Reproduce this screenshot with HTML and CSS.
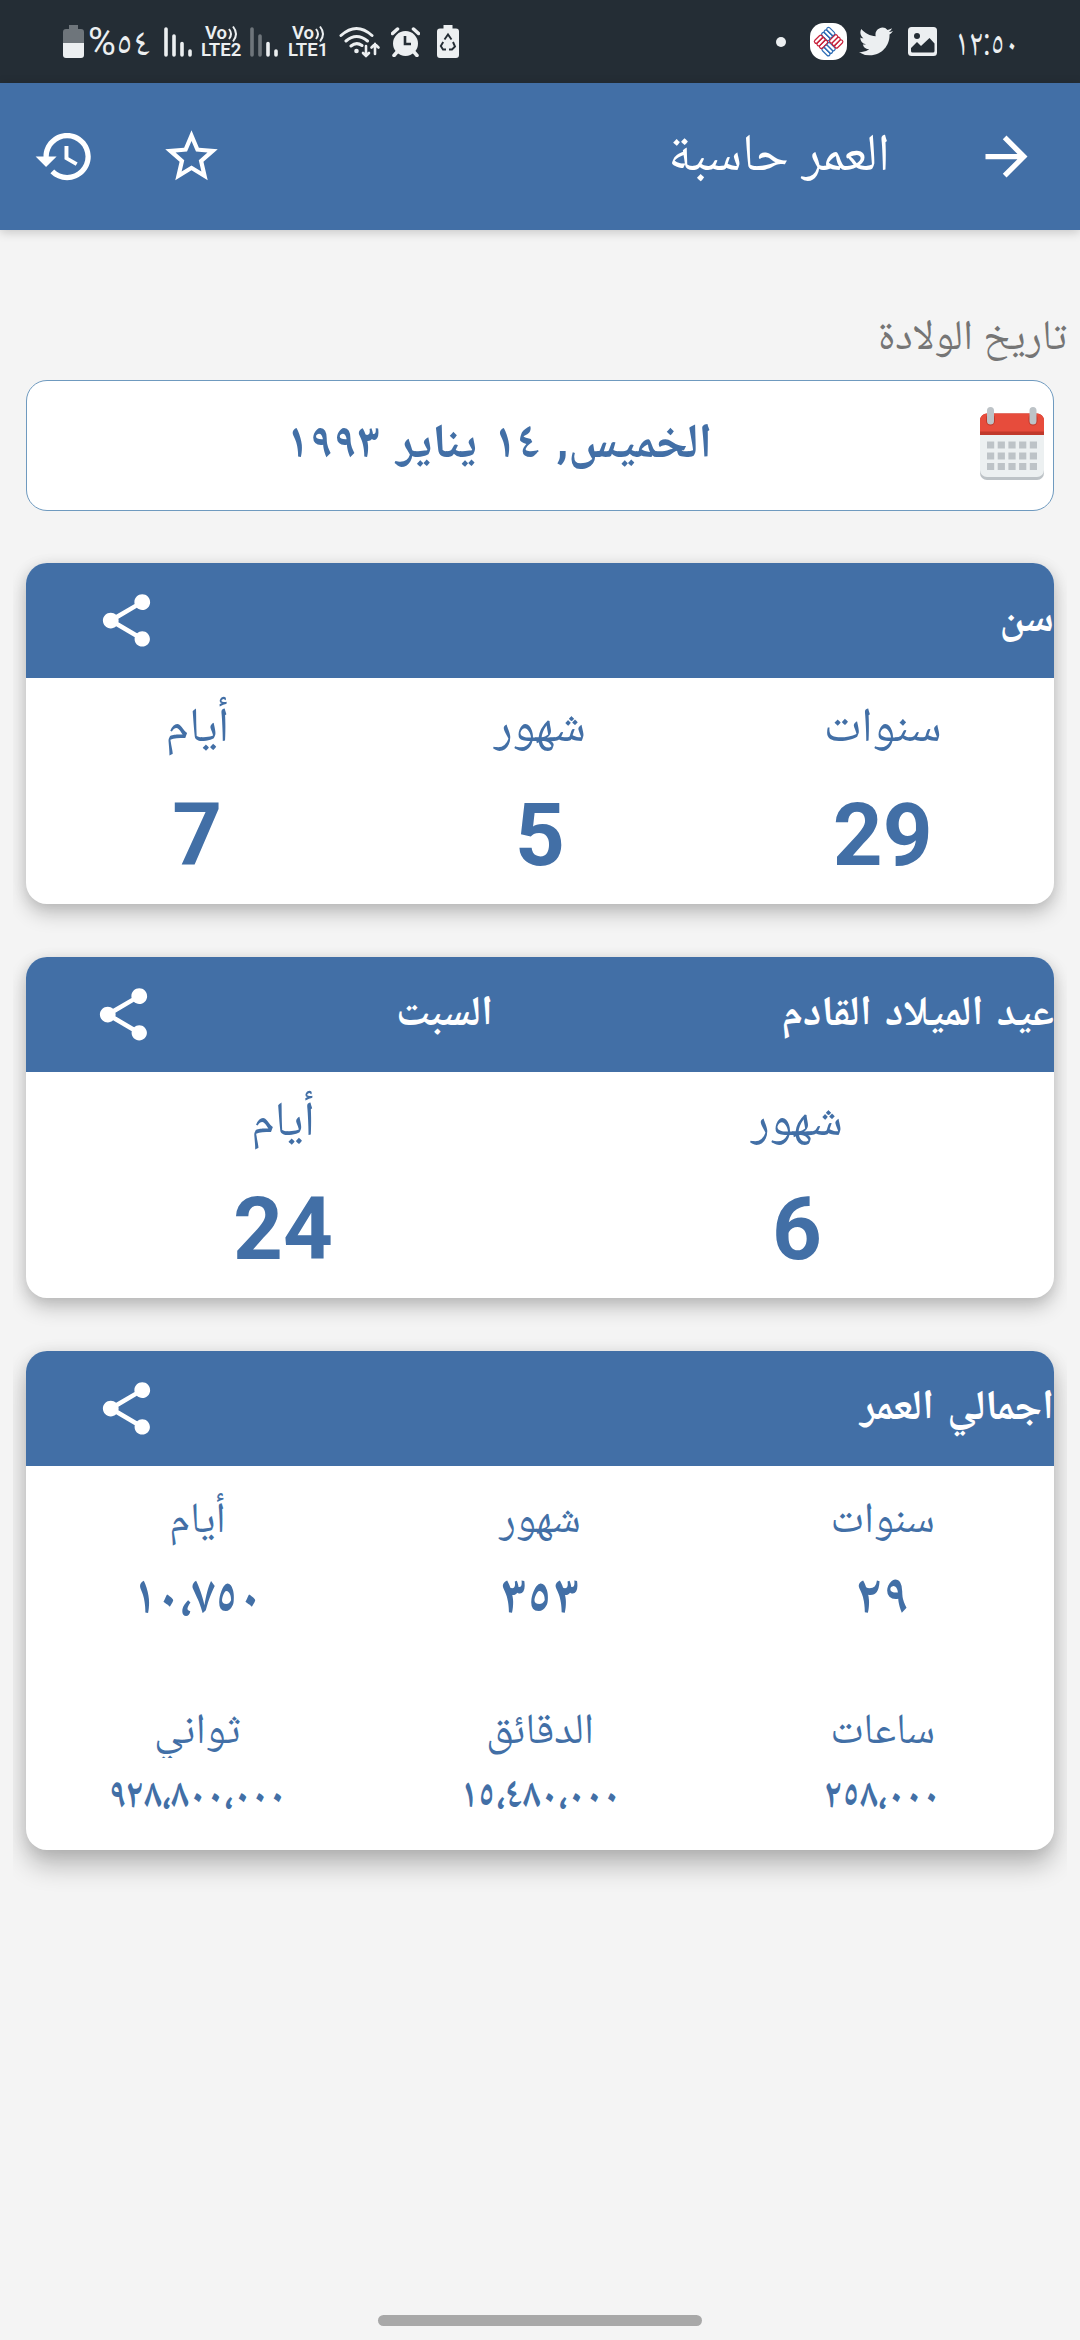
FILE: index.html
```html
<!DOCTYPE html>
<html lang="ar" dir="rtl">
<head>
    <meta charset="UTF-8">
    <meta name="viewport" content="width=device-width, initial-scale=1.0">
    <title>العمر حاسبة</title>
    <link rel="stylesheet" href="styles.css">
</head>
<body>
    <!-- Shared icons -->
    <svg class="sprite" width="0" height="0">
        <symbol id="icon-share" viewBox="0 0 24 24">
            <path d="M18 16.08c-.76 0-1.44.3-1.96.77L8.91 12.7c.05-.23.09-.46.09-.7s-.04-.47-.09-.7l7.05-4.11c.54.5 1.25.81 2.04.81 1.66 0 3-1.34 3-3s-1.34-3-3-3-3 1.34-3 3c0 .24.04.47.09.7L8.04 9.81C7.5 9.31 6.79 9 6 9c-1.66 0-3 1.34-3 3s1.34 3 3 3c.79 0 1.5-.31 2.04-.81l7.12 4.16c-.05.21-.08.43-.08.65 0 1.61 1.31 2.92 2.92 2.92 1.61 0 2.92-1.31 2.92-2.92s-1.31-2.92-2.92-2.92z"/>
        </symbol>
    </svg>

    <!-- Status bar -->
    <div class="status-bar">
        <div class="status-group">
            <svg class="battery" viewBox="0 0 21 33">
                <path d="M6 0h9v4h3a3 3 0 0 1 3 3v11H0V7a3 3 0 0 1 3-3h3z" fill="#6e757b"/>
                <path d="M0 18h21v12a3 3 0 0 1-3 3H3a3 3 0 0 1-3-3z"/>
            </svg>
            <span class="percent">%٥٤</span>
            <svg class="signal" viewBox="0 0 28 30">
                <path d="M2 2v26M10 9v19M18 16.5v11.5M26 24v4"/>
            </svg>
            <div class="lte">
                <span class="volte">Vo<svg viewBox="0 0 10 18"><path d="M1 4q4 5 0 10M5 1.5q6 7.5 0 15"/></svg></span>
                <span>LTE2</span>
            </div>
            <svg class="signal" viewBox="0 0 28 30">
                <path class="off" d="M2 2v26M10 9v19"/>
                <path d="M18 16.5v11.5M26 24v4"/>
            </svg>
            <div class="lte lte-one">
                <span class="volte">Vo<svg viewBox="0 0 10 18"><path d="M1 4q4 5 0 10M5 1.5q6 7.5 0 15"/></svg></span>
                <span>LTE1</span>
            </div>
            <svg class="wifi" viewBox="0 0 43 32">
                <g fill="none" stroke="#eceff1" stroke-width="3" stroke-linecap="round">
                    <path d="M2 9.5q15.5-14 31 0M7 15q10.5-9 21.5 0M12 20q5.5-4.5 11-.5"/>
                    <path d="M27 20v10m-3-3l3 3 3-3M36 28V18m-3.5 3.5L36 18l3.5 3.5" stroke-width="2.6"/>
                </g>
                <circle cx="17.5" cy="25" r="2.3"/>
            </svg>
            <svg class="alarm" viewBox="0 0 29 30">
                <circle cx="14.5" cy="16.5" r="12.5"/>
                <path d="M1.5 6.5l5-4.5M27.5 6.5l-5-4.5M6 25l-3 3.5M23 25l3 3.5" stroke="#eceff1" stroke-width="3.5" stroke-linecap="round"/>
                <path d="M14 9v8h6" fill="none" stroke="#242d35" stroke-width="2.6"/>
            </svg>
            <svg class="saver" viewBox="0 0 22 33">
                <path d="M6.5 0h9v3.5H19a3 3 0 0 1 3 3V30a3 3 0 0 1-3 3H3a3 3 0 0 1-3-3V6.5a3 3 0 0 1 3-3h3.5z"/>
                <path d="M7.5 14.5L11 9.5l3.5 5M16 17l2 4.5-3 3h-3M9 24.5H6L3.8 21l2.4-4" fill="none" stroke="#242d35" stroke-width="1.9"/>
            </svg>
        </div>

        <div class="status-group">
            <span class="dot"></span>
            <svg class="app-badge" viewBox="0 0 37 37">
                <rect width="37" height="37" rx="14" fill="#fff"/>
                <g transform="rotate(45 18.5 18.5)" fill="none" stroke-width="1.2">
                    <g stroke="#2f6db5">
                        <rect x="8" y="8" width="10" height="3.6" rx="1.8"/>
                        <rect x="8" y="11.6" width="10" height="3.6" rx="1.8"/>
                        <rect x="8" y="15.2" width="10" height="3.6" rx="1.8"/>
                        <rect x="19" y="18.5" width="10" height="3.6" rx="1.8"/>
                        <rect x="19" y="22.1" width="10" height="3.6" rx="1.8"/>
                        <rect x="19" y="25.7" width="10" height="3.6" rx="1.8"/>
                    </g>
                    <g stroke="#c8203a">
                        <rect x="8" y="19" width="3.6" height="10" rx="1.8"/>
                        <rect x="11.6" y="19" width="3.6" height="10" rx="1.8"/>
                        <rect x="15.2" y="19" width="3.6" height="10" rx="1.8"/>
                        <rect x="18.5" y="8" width="3.6" height="10" rx="1.8"/>
                        <rect x="22.1" y="8" width="3.6" height="10" rx="1.8"/>
                        <rect x="25.7" y="8" width="3.6" height="10" rx="1.8"/>
                    </g>
                </g>
            </svg>
            <svg class="twitter" viewBox="0 2.2 24 19.6">
                <path d="M23.953 4.57a10 10 0 0 1-2.825.775 4.958 4.958 0 0 0 2.163-2.723c-.951.555-2.005.959-3.127 1.184a4.92 4.92 0 0 0-8.384 4.482C7.69 8.095 4.067 6.13 1.64 3.162a4.822 4.822 0 0 0-.666 2.475c0 1.71.87 3.213 2.188 4.096a4.904 4.904 0 0 1-2.228-.616v.06a4.923 4.923 0 0 0 3.946 4.827 4.996 4.996 0 0 1-2.212.085 4.936 4.936 0 0 0 4.604 3.417 9.867 9.867 0 0 1-6.102 2.105c-.39 0-.779-.023-1.17-.067a13.995 13.995 0 0 0 7.557 2.209c9.053 0 13.998-7.496 13.998-13.985 0-.21 0-.42-.015-.63A9.935 9.935 0 0 0 24 4.59z"/>
            </svg>
            <svg class="gallery" viewBox="0 0 29 29">
                <rect width="29" height="29" rx="3.5"/>
                <circle cx="9" cy="9" r="3" fill="#242d35"/>
                <path d="M3 21l6-6 4 4 8.5-8 5 5.5V24a1.5 1.5 0 0 1-1.5 1.5H4.5A1.5 1.5 0 0 1 3 24z" fill="#242d35"/>
            </svg>
            <span class="time">١٢:٥٠</span>
        </div>
    </div>

    <!-- App bar -->
    <header class="app-bar">
        <svg class="icon" viewBox="0 0 24 24"><path d="M12 4l-1.41 1.41L16.17 11H4v2h12.17l-5.58 5.59L12 20l8-8z"/></svg>
        <h1>العمر حاسبة</h1>
        <svg class="icon" viewBox="0 0 24 24"><path d="M22 9.24l-7.19-.62L12 2 9.19 8.63 2 9.24l5.46 4.73L5.82 21 12 17.27 18.18 21l-1.63-7.03L22 9.24zM12 15.4l-3.76 2.27 1-4.28-3.32-2.88 4.38-.38L12 6.1l1.71 4.04 4.38.38-3.32 2.88 1 4.28L12 15.4z"/></svg>
        <svg class="icon" viewBox="0 0 24 24"><path d="M13 3c-4.97 0-9 4.03-9 9H1l3.89 3.89.07.14L9 12H6c0-3.87 3.13-7 7-7s7 3.13 7 7-3.13 7-7 7c-1.93 0-3.68-.79-4.94-2.06l-1.42 1.42C8.27 19.99 10.51 21 13 21c4.97 0 9-4.03 9-9s-4.03-9-9-9zm-1 5v5l4.28 2.54.72-1.21-3.5-2.08V8H12z"/></svg>
    </header>

    <main>
        <p class="field-label">تاريخ الولادة</p>
        <div class="date-field">
            <svg class="calendar" viewBox="0 0 64 73">
                <path d="M0 28h64v38a7 7 0 0 1-7 7H7a7 7 0 0 1-7-7z" fill="#bdc3c7"/>
                <path d="M0 28h64v35a7 7 0 0 1-7 7H7a7 7 0 0 1-7-7z" fill="#ecf0f1"/>
                <path d="M7 6.5h50a7 7 0 0 1 7 7V28H0V13.5a7 7 0 0 1 7-7z" fill="#c0392b"/>
                <path d="M7 6.5h50a7 7 0 0 1 7 7V24.5H0V13.5a7 7 0 0 1 7-7z" fill="#e74c3c"/>
                <path d="M10.5 11v3M53 11v3" stroke="#c0392b" stroke-width="9" stroke-linecap="round"/>
                <path d="M10.5 3.5v10.5M53 3.5v10.5" stroke="#bdc3c7" stroke-width="7" stroke-linecap="round"/>
                <path d="M7 38h50.5M7 49h50.5M7 59.5h50.5" stroke="#bdc3c7" stroke-width="7.2" stroke-dasharray="7.2 3.5"/>
            </svg>
            <span class="date">الخميس, ١٤ يناير ١٩٩٣</span>
        </div>

        <!-- Age -->
        <section class="card">
            <div class="card-header">
                <h2>سن</h2>
                <svg class="icon"><use href="#icon-share"/></svg>
            </div>
            <div class="columns">
                <div class="item"><span class="name">سنوات</span><span class="number">29</span></div>
                <div class="item"><span class="name">شهور</span><span class="number">5</span></div>
                <div class="item"><span class="name">أيام</span><span class="number">7</span></div>
            </div>
        </section>

        <!-- Next birthday -->
        <section class="card birthday">
            <div class="card-header">
                <h2>عيد الميلاد القادم</h2>
                <span class="weekday">السبت</span>
                <svg class="icon"><use href="#icon-share"/></svg>
            </div>
            <div class="columns">
                <div class="item"><span class="name">شهور</span><span class="number">6</span></div>
                <div class="item"><span class="name">أيام</span><span class="number">24</span></div>
            </div>
        </section>

        <!-- Total age -->
        <section class="card total">
            <div class="card-header">
                <h2>اجمالي العمر</h2>
                <svg class="icon"><use href="#icon-share"/></svg>
            </div>
            <div class="columns">
                <div class="item"><span class="name">سنوات</span><span class="number">٢٩</span></div>
                <div class="item"><span class="name">شهور</span><span class="number">٣٥٣</span></div>
                <div class="item"><span class="name">أيام</span><span class="number grouped">١٠،٧٥٠</span></div>
            </div>
            <div class="columns small">
                <div class="item"><span class="name">ساعات</span><span class="number grouped">٢٥٨،٠٠٠</span></div>
                <div class="item"><span class="name">الدقائق</span><span class="number grouped">١٥،٤٨٠،٠٠٠</span></div>
                <div class="item"><span class="name">ثواني</span><span class="number grouped">٩٢٨،٨٠٠،٠٠٠</span></div>
            </div>
        </section>
    </main>

    <div class="nav-handle"></div>
</body>
</html>
```
FILE: styles.css
```css
:root {
    --primary-color: #426fa6;
    --background-color: #f4f4f4;
    --status-color: #242d35;
    --light: #eceff1;
}

* {
    margin: 0;
    padding: 0;
    box-sizing: border-box;
}

body {
    display: flex;
    flex-direction: column;
    width: 1080px;
    height: 2340px;
    overflow: hidden;
    font-family: Roboto, "Noto Naskh Arabic", "DejaVu Sans", sans-serif;
    background-color: var(--background-color);
    color: var(--primary-color);
}

svg {
    display: block;
    flex: none;
}

.sprite {
    position: absolute;
}

.icon {
    width: 63px;
    height: 63px;
    fill: white;
}

/* Status bar */
.status-bar {
    direction: ltr;
    display: flex;
    flex: none;
    justify-content: space-between;
    height: 83px;
    padding: 0 65px 0 63px;
    background-color: var(--status-color);
    color: var(--light);
    fill: var(--light);
}

.status-group {
    display: flex;
    align-items: center;
    height: 83px;
}

.battery { width: 21px; height: 33px; }

.percent {
    width: 59px;
    margin: 0 17px 0 4px;
    font-size: 38px;
    line-height: 60px;
    letter-spacing: -1px;
    white-space: nowrap;
}

.signal {
    width: 28px;
    height: 30px;
    fill: none;
    stroke: var(--light);
    stroke-width: 3.6;
    stroke-linecap: round;
}

.signal .off { stroke: #6e757b; }

.lte {
    display: flex;
    flex-direction: column;
    width: 40px;
    margin: 0 9px;
    font-size: 18.5px;
    font-weight: 600;
    line-height: 16px;
}

.lte-one {
    width: 38px;
    margin: 0 13px 0 10px;
}

.volte {
    display: flex;
    gap: 1px;
    height: 17px;
    padding-left: 4px;
}

.volte svg {
    width: 10px;
    height: 18px;
    fill: none;
    stroke: var(--light);
    stroke-width: 2;
}

.wifi { width: 43px; height: 32px; margin-right: 9px; }
.alarm { width: 29px; height: 30px; margin-right: 17px; }
.saver { width: 22px; height: 33px; }

.dot {
    width: 10px;
    height: 10px;
    margin-right: 24px;
    border-radius: 50%;
    background-color: var(--light);
}

.app-badge { width: 37px; height: 37px; margin-right: 12px; }
.twitter { width: 34px; height: 29px; margin-right: 15px; }
.gallery { width: 29px; height: 29px; margin-right: 18px; }

.time {
    width: 60px;
    font-size: 38px;
    line-height: 58px;
    white-space: nowrap;
    transform: scaleX(0.82);
    transform-origin: left;
}

/* App bar */
.app-bar {
    position: relative;
    display: flex;
    flex: none;
    align-items: center;
    gap: 64px;
    height: 147px;
    padding: 0 42px 0 33px;
    background-color: var(--primary-color);
    box-shadow: 0 2px 10px rgba(0, 0, 0, 0.2);
    color: white;
}

.app-bar h1 {
    flex: 1;
    padding: 0 21px 10px 0;
    font-size: 52.5px;
    font-weight: 400;
    line-height: 70px;
}

/* Content */
main {
    flex: 1;
    margin: 0 13px;
    padding-top: 75px;
    overflow-x: clip;
}

.field-label {
    margin-bottom: 15px;
    font-size: 42px;
    line-height: 60px;
    color: #757575;
}

.date-field {
    display: flex;
    align-items: center;
    height: 131px;
    margin: 0 13px;
    padding: 0 9px 5px 0;
    border: 1px solid #6f9abf;
    border-radius: 21px;
    background-color: white;
}

.calendar {
    width: 64px;
    height: 73px;
    margin-left: 9px;
}

.date {
    flex: 1;
    padding-bottom: 4px;
    font-size: 48.5px;
    font-weight: 700;
    line-height: 70px;
    word-spacing: 4px;
    text-align: center;
}

.card {
    height: 341px;
    margin: 52px 13px 53px;
    border-radius: 21px;
    background-color: white;
    box-shadow: 0 10px 20px rgba(0, 0, 0, 0.2), 0 2px 14px rgba(0, 0, 0, 0.1);
}

.card + .card {
    margin-top: 0;
}

.card-header {
    display: flex;
    align-items: center;
    height: 115px;
    padding-left: 69px;
    border-radius: 21px 21px 0 0;
    background-color: var(--primary-color);
    color: white;
    line-height: 60px;
}

.card-header h2,
.weekday {
    padding-bottom: 7px;
    font-size: 42px;
    font-weight: 700;
    word-spacing: 3px;
}

.card-header h2 {
    flex: 1;
}

.birthday .card-header {
    padding-left: 66px;
}

.weekday {
    margin-left: 241px;
}

.columns {
    display: flex;
}

.item {
    display: flex;
    flex: 1;
    flex-direction: column;
    text-align: center;
}

.name {
    height: 96px;
    font-size: 48.5px;
    line-height: 94px;
}

.number {
    font-size: 87px;
    font-weight: 700;
    line-height: 123px;
}

/* Total age card */
.total {
    height: 499px;
    box-shadow: 0 16px 26px rgba(0, 0, 0, 0.24), 0 2px 16px rgba(0, 0, 0, 0.1);
}

.total .name {
    height: 104px;
    font-size: 43px;
    line-height: 102px;
}

.total .number {
    font-size: 54px;
    line-height: 50px;
}

.total .grouped {
    transform: scaleX(0.88);
}

.small {
    padding-top: 82px;
}

/* fixed height cuts the dots of a final yeh */
.total .small .name {
    height: 56px;
    line-height: 53px;
    overflow: hidden;
}

.total .small .number {
    font-size: 41px;
    line-height: 71px;
}

.nav-handle {
    flex: none;
    width: 324px;
    height: 11px;
    margin: 0 auto 14px;
    border-radius: 6px;
    background-color: #a8a8a8;
}
```
